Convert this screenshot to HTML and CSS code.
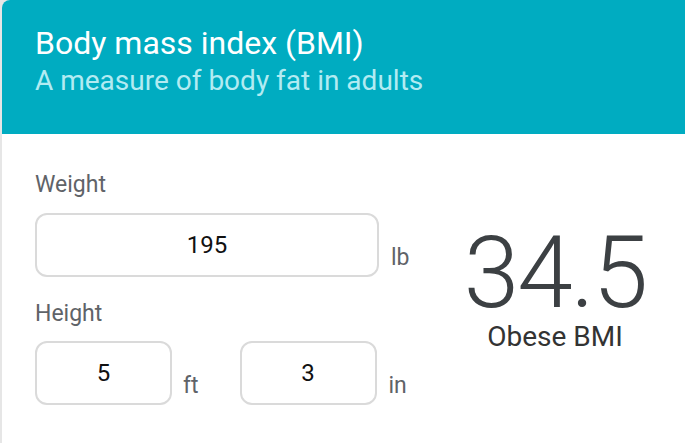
FILE: index.html
```html
<!DOCTYPE html>
<html>
<head>
<meta charset="utf-8">
<link rel="stylesheet" href="styles.css">
</head>
<body>
<div class="card">
  <header class="head">
    <h1 class="title">Body mass index (BMI)</h1>
    <p class="subtitle">A measure of body fat in adults</p>
  </header>
  <main class="content">
    <div class="inputs">
      <div class="label">Weight</div>
      <div class="row first">
        <div class="field wide">195</div>
        <span class="unit">lb</span>
      </div>
      <div class="label second">Height</div>
      <div class="row">
        <div class="field small">5</div>
        <span class="unit">ft</span>
        <div class="field small gap">3</div>
        <span class="unit">in</span>
      </div>
    </div>
    <div class="result">
      <div class="value">34.5</div>
      <div class="category">Obese BMI</div>
    </div>
  </main>
</div>
</body>
</html>
```
FILE: styles.css
```css
html, body {
  margin: 0;
  padding: 0;
  background: #e6e6e6;
  font-family: Roboto, "Noto Sans", sans-serif;
}
body {
  padding-left: 2px;
  height: 443px;
  overflow: hidden;
}
.card {
  background: #ffffff;
  border-top-left-radius: 8px;
  overflow: hidden;
  height: 443px;
}
.head {
  background: #00acc1;
  height: 134px;
  box-sizing: border-box;
  padding: 25px 33px 0;
}
.title {
  margin: 0;
  font-size: 32px;
  font-weight: 400;
  color: #ffffff;
  line-height: 36px;
}
.subtitle {
  margin: 4px 0 0;
  font-size: 28px;
  color: #b2ebf2;
  line-height: 32px;
}
.content {
  display: flex;
  padding: 37px 0 0 33px;
}
.inputs {
  width: 390px;
  flex: none;
}
.label {
  font-size: 23px;
  color: #5f6368;
  line-height: 28px;
}
.label.second {
  margin-top: 23px;
}
.row {
  display: flex;
  align-items: flex-end;
  margin-top: 13px;
}
.row.first {
  margin-top: 14px;
}
.field {
  box-sizing: border-box;
  height: 64px;
  border: 2px solid #dadada;
  border-radius: 12px;
  display: flex;
  align-items: center;
  justify-content: center;
  font-size: 24px;
  color: #111;
}
.field.wide { width: 344px; }
.field.small { width: 137px; }
.field.gap { margin-left: 41px; }
.unit {
  font-size: 23px;
  color: #5f6368;
  margin-left: 11px;
  line-height: 28px;
  margin-bottom: 5px;
}
.field.wide + .unit { margin-left: 12px; }
.field.gap + .unit { margin-left: 12px; }
.result {
  flex: 1;
  display: flex;
  flex-direction: column;
  align-items: center;
  padding-top: 52px;
}
.value {
  font-size: 100px;
  font-weight: 300;
  color: #3c4043;
  line-height: 100px;
  letter-spacing: -2px;
}
.category {
  font-size: 28px;
  color: #333;
  line-height: 30px;
  margin-top: -1px;
}
```
